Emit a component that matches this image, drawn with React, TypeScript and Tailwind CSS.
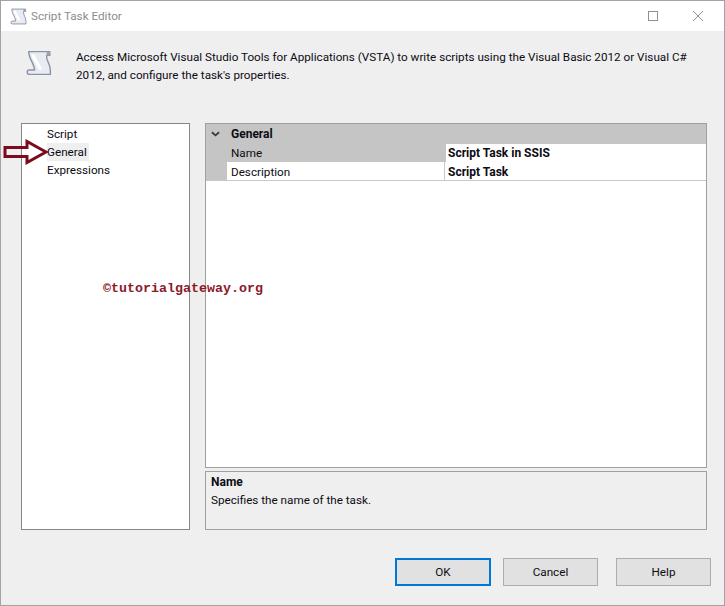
const ScrollIcon = ({ className }: { className: string }) => (
  <svg viewBox="0 0 24 24" className={className}>
    <path d="M2.500 1.500H22V5H19C18.500 10 23 14 22.500 19V22.500H3C.5 22.500.5 18.500 3 18.500H8C7.500 12 2.500 8 2.500 1.500z" fill="#e8ecf2" stroke="#8a93a3" strokeWidth="1.300" strokeLinejoin="round" />
    <path d="M19 1.500h3V5h-3z" fill="#9aa3b0" />
    <path d="M6.500 4c.5 5 6 9 6.500 14" fill="none" stroke="#fff" strokeWidth="3" />
  </svg>
);

const App = () => {
  return (
    <div className="relative flex h-[606px] w-[725px] flex-col overflow-hidden border border-[#a3a3a3] bg-[#efefef] font-['Roboto',sans-serif] text-[11.700px] leading-[18px] text-[#0c0c14]">
      {/* Title bar */}
      <div className="flex h-[30px] shrink-0 items-center bg-white pl-[9px]">
        <ScrollIcon className="h-[17px] w-[17px]" />
        <span className="ml-[4px] text-[#8d8d8d]">Script Task Editor</span>
        <div className="ml-auto flex items-center">
          <div className="h-[10px] w-[10px] border border-[#8f8f8f]" />
          <svg viewBox="0 0 10 10" className="ml-[35px] mr-[21px] h-[10px] w-[10px]">
            <path d="M0 0l10 10M10 0L0 10" stroke="#8f8f8f" strokeWidth="1" />
          </svg>
        </div>
      </div>

      {/* Description */}
      <div className="flex h-[92px] shrink-0 pl-[25px] pt-[17px]">
        <ScrollIcon className="mt-[2px] h-[26px] w-[26px]" />
        <p className="ml-[24px] w-[620px]">
          Access Microsoft Visual Studio Tools for Applications (VSTA) to write scripts using the Visual Basic 2012 or Visual C# 2012, and configure the task's properties.
        </p>
      </div>

      {/* Main area */}
      <div className="flex h-[407px] shrink-0 pl-[20px]">
        <div className="flex w-[169px] flex-col border border-[#85858a] bg-white pl-[25px] pt-[1px]">
          <div className="h-[18px]">Script</div>
          <div className="h-[18px] w-fit bg-[#efefef] pr-[2px]">General</div>
          <div className="h-[18px]">Expressions</div>
        </div>
        <div className="ml-[15px] flex w-[502px] flex-col">
          <div className="flex h-[345px] flex-col border border-[#a0a0a0] bg-white">
            <div className="flex h-[19px] items-center bg-[#c5c5c5]">
              <svg viewBox="0 0 10 6" className="ml-[5px] h-[6px] w-[9px]">
                <path d="M1 1l4 3.500L9 1" fill="none" stroke="#3a3a3a" strokeWidth="2" />
              </svg>
              <span className="ml-[11px] text-[12px] font-bold">General</span>
            </div>
            <div className="flex h-[19px] items-end bg-[#c5c5c5]">
              <span className="ml-[25px] w-[214px]">Name</span>
              <span className="ml-[1px] flex-1 bg-white pl-[2px] text-[12px] font-bold">Script Task in SSIS</span>
            </div>
            <div className="flex h-[19px] items-stretch border-b border-[#c9c9c9]">
              <div className="w-[21px] bg-[#c5c5c5]" />
              <span className="w-[218px] border-r border-[#c9c9c9] pl-[4px] pt-[1px]">Description</span>
              <span className="flex-1 pl-[3px] pt-[1px] text-[12px] font-bold">Script Task</span>
            </div>
          </div>
          <div className="mt-[3px] h-[59px] border border-[#a0a0a0] px-[5px] pt-[1px]">
            <div className="text-[12px] font-bold">Name</div>
            <div>Specifies the name of the task.</div>
          </div>
        </div>
      </div>

      {/* Buttons */}
      <div className="flex pl-[394px] pt-[28px]">
        <button className="h-[28px] w-[96px] border-2 border-[#0078d7] bg-[#e1e1e1]">OK</button>
        <button className="ml-[12px] h-[28px] w-[95px] border border-[#adadad] bg-[#e1e1e1]">Cancel</button>
        <button className="ml-[18px] h-[28px] w-[95px] border border-[#adadad] bg-[#e1e1e1]">Help</button>
      </div>

      {/* Annotations on top of the dialog */}
      <svg viewBox="0 0 46 26" className="absolute left-[2px] top-[138px] h-[26px] w-[46px]">
        <path d="M2 8.500h22V2.500L43 13 24 23.500V17.500H2z" fill="none" stroke="#7b0a1e" strokeWidth="3" />
      </svg>
      <span className="absolute left-[102px] top-[279px] font-['Liberation_Mono',monospace] text-[13.330px] font-bold text-[#8b1a2b]">©tutorialgateway.org</span>
    </div>
  );
};

export default App;
